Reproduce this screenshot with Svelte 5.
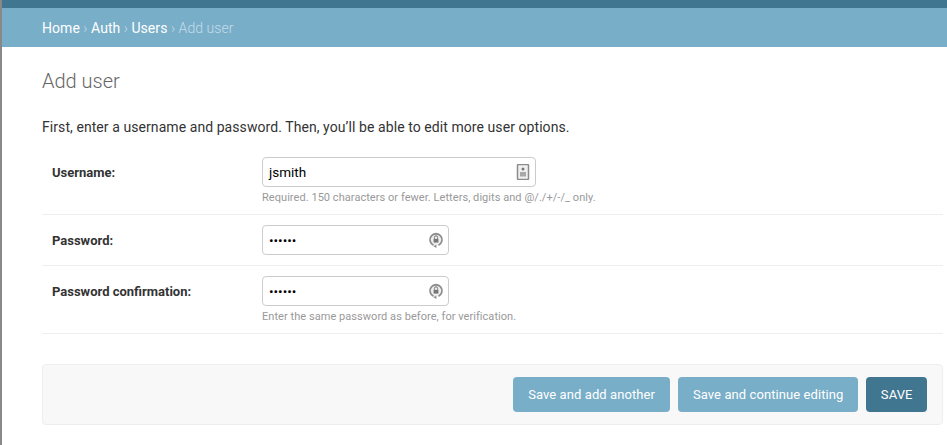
<script>
  const crumbs = ['Home', 'Auth', 'Users'];
</script>

<div class="page">
  <div class="topbar"></div>
  <nav class="breadcrumbs">
    {#each crumbs as c}<a href="#top">{c}</a>{' › '}{/each}<span class="current">Add user</span>
  </nav>

  <main class="content">
    <h1>Add user</h1>
    <p class="intro">First, enter a username and password. Then, you’ll be able to edit more user options.</p>

    <div class="row">
      <label for="username">Username:</label>
      <div class="field">
        <div class="input wide">
          <span class="value" id="username">jsmith</span>
          <svg class="icon" viewBox="0 0 16 16" width="16" height="16">
            <rect x="2.5" y="0.5" width="11" height="15" rx="1" fill="#f0f0f0" stroke="#8c8c8c" stroke-width="1.5" />
            <circle cx="8" cy="5" r="1.5" fill="#777" />
            <rect x="5" y="8" width="6" height="4.5" fill="#a8a8a8" />
          </svg>
        </div>
        <div class="help">Required. 150 characters or fewer. Letters, digits and @/./+/-/_ only.</div>
      </div>
    </div>

    <div class="row">
      <label for="password1">Password:</label>
      <div class="field">
        <div class="input">
          <span class="dots" id="password1">••••••</span>
          <svg class="icon" viewBox="0 0 16 16" width="16" height="16">
            <path d="M5.5 13.2A6 6 0 1 1 10.5 13.2" fill="#efefef" stroke="#8c8c8c" stroke-width="1.8" />
            <rect x="5.6" y="6.8" width="4.8" height="3.8" fill="#777" />
            <path d="M6.4 6.8V5.4a1.6 1.6 0 0 1 3.2 0v1.4" fill="none" stroke="#777" />
            <path d="M8.4 12.4v3.6l-3-1.8z" fill="#8c8c8c" />
          </svg>
        </div>
      </div>
    </div>

    <div class="row">
      <label for="password2">Password confirmation:</label>
      <div class="field">
        <div class="input">
          <span class="dots" id="password2">••••••</span>
          <svg class="icon" viewBox="0 0 16 16" width="16" height="16">
            <path d="M5.5 13.2A6 6 0 1 1 10.5 13.2" fill="#efefef" stroke="#8c8c8c" stroke-width="1.8" />
            <rect x="5.6" y="6.8" width="4.8" height="3.8" fill="#777" />
            <path d="M6.4 6.8V5.4a1.6 1.6 0 0 1 3.2 0v1.4" fill="none" stroke="#777" />
            <path d="M8.4 12.4v3.6l-3-1.8z" fill="#8c8c8c" />
          </svg>
        </div>
        <div class="help">Enter the same password as before, for verification.</div>
      </div>
    </div>

    <div class="submit-row">
      <button>Save and add another</button>
      <button>Save and continue editing</button>
      <button class="default">SAVE</button>
    </div>
  </main>
</div>

<style>
  :global(body) {
    margin: 0;
    background: #fff;
    font-family: Roboto, "Liberation Sans", sans-serif;
    color: #333;
  }
  .page {
    border-left: 2px solid #888;
    height: 445px;
    overflow: hidden;
    box-sizing: border-box;
  }
  .topbar {
    height: 8px;
    margin-left: -2px;
    background: #417690;
  }
  .breadcrumbs {
    height: 39px;
    padding-left: 40px;
    line-height: 41px;
    white-space: pre;
    background: #79aec8;
    color: #c4dce8;
    font-size: 14px;
    font-weight: 300;
    letter-spacing: 0.05px;
  }
  .breadcrumbs a {
    color: #fff;
    font-weight: 400;
    text-decoration: none;
  }
  .content {
    padding: 0 4px 0 40px;
  }
  h1 {
    margin: 22px 0 0;
    font-size: 20px;
    line-height: 24px;
    font-weight: 300;
    color: #666;
  }
  .intro {
    margin: 26px 0 0;
    font-size: 14px;
    line-height: 16px;
    letter-spacing: 0.07px;
    color: #333;
  }
  .row {
    display: flex;
    padding: 10px;
    border-bottom: 1px solid #eee;
  }
  .intro + .row {
    margin-top: 12px;
  }
  label {
    width: 210px;
    flex: none;
    padding-top: 9px;
    font-size: 13px;
    line-height: 14px;
    font-weight: 700;
    color: #333;
  }
  .input {
    box-sizing: border-box;
    width: 187px;
    height: 30px;
    border: 1px solid #ccc;
    border-radius: 4px;
    display: flex;
    align-items: center;
    justify-content: space-between;
    padding: 0 4px 0 6px;
  }
  .input.wide {
    width: 274px;
  }
  .value {
    font-size: 13.5px;
    color: #000;
  }
  .dots {
    font-size: 13.5px;
    color: #000;
  }
  .help {
    margin-top: 4px;
    font-size: 11px;
    line-height: 13px;
    letter-spacing: 0.05px;
    color: #999;
  }
  .submit-row {
    margin-top: 30px;
    height: 61px;
    box-sizing: border-box;
    padding: 12px 15px;
    display: flex;
    justify-content: flex-end;
    align-items: center;
    gap: 8px;
    background: #f8f8f8;
    border: 1px solid #eee;
    border-radius: 4px;
  }
  button {
    height: 35px;
    padding: 0 15px;
    border: none;
    border-radius: 4px;
    background: #79aec8;
    color: #fff;
    font-family: inherit;
    font-size: 13px;
    letter-spacing: 0.08px;
  }
  button.default {
    padding: 0 14.5px;
    background: #417690;
  }
</style>
